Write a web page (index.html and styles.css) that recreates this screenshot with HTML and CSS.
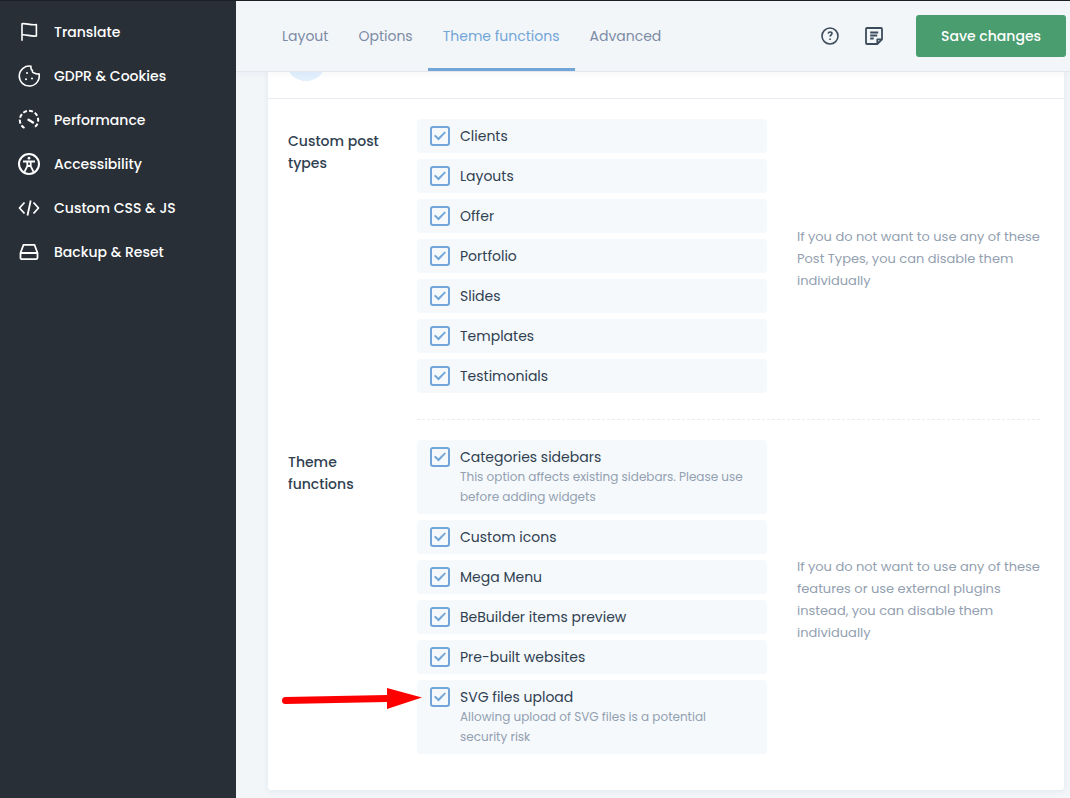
FILE: index.html
```html
<!DOCTYPE html>
<html lang="en">
<head>
<meta charset="utf-8">
<meta name="viewport" content="width=device-width, initial-scale=1">
<title>Theme functions</title>
<link rel="stylesheet" href="styles.css">
</head>
<body>
<div class="app">
  <nav class="sidebar" aria-label="Settings">
    <a class="side-link" href="#translate">
      <svg class="icon" viewBox="0 0 22 22"><path d="M4 19.700V2.800c4-.8 8 1.500 14.400.8v11.400c-5.600.8-10.400-1.900-14.400-1.200"/></svg>
      <span>Translate</span></a>
    <a class="side-link" href="#gdpr">
      <svg class="icon" viewBox="0 0 22 22"><path d="M13 1.200A10 10 0 1 0 21 8.800c-1.800.3-3.400.1-4.300-.7-1.900-.2-2.500-1.300-2.300-2.700-1.400-1-1.800-2.400-1.400-4.200z"/><path class="dots" d="M9 8h.01M8 14.200h.01M14 13.500h.01"/></svg>
      <span>GDPR &amp; Cookies</span></a>
    <a class="side-link" href="#performance">
      <svg class="icon" viewBox="0 0 22 22"><path class="dash" d="M6.500 19A9.200 9.200 0 1 1 15.500 19"/><path class="needle" d="M10.500 10.800l4.500 2.700"/></svg>
      <span>Performance</span></a>
    <a class="side-link" href="#accessibility">
      <svg class="icon" viewBox="0 0 22 22"><circle class="bold" cx="11" cy="11" r="10"/><circle class="fill" cx="11" cy="5.200" r="1.400"/><path class="code" d="M5 8.500h12M9.300 8.700v4.500L6.500 18.800M12.700 8.700v4.500l2.800 5.600M9.300 13h3.400"/></svg>
      <span>Accessibility</span></a>
    <a class="side-link" href="#custom">
      <svg class="icon" viewBox="0 0 22 22"><path class="code" d="M6.500 5.500L1.500 11l5 5.500M15.500 5.500l5 5.500-5 5.500M12.700 3.500L9.500 18.500"/></svg>
      <span>Custom CSS &amp; JS</span></a>
    <a class="side-link" href="#backup">
      <svg class="icon" viewBox="0 0 22 22"><path class="code" d="M5.500 3.800h11L19.500 12v4.700a1.500 1.500 0 0 1-1.500 1.500H4a1.500 1.500 0 0 1-1.500-1.500V12zM2.500 12h17"/></svg>
      <span>Backup &amp; Reset</span></a>
  </nav>

  <main class="main">
    <header class="topbar">
      <nav class="tabs" aria-label="Sections">
        <a class="tab" href="#layout">Layout</a>
        <a class="tab" href="#options">Options</a>
        <a class="tab active" href="#functions" aria-current="page">Theme functions</a>
        <a class="tab" href="#advanced">Advanced</a>
      </nav>
      <div class="actions">
        <button class="icon-button" type="button" aria-label="Help">
          <svg class="icon" viewBox="0 0 22 22"><circle cx="11" cy="11" r="8"/><path d="M9.200 8.600c.2-1.100.9-1.600 1.900-1.600 1.100 0 1.900.7 1.900 1.600 0 1.400-1.900 1.400-1.900 2.900M11.100 13.400v1.500"/></svg>
        </button>
        <button class="icon-button" type="button" aria-label="Notes">
          <svg class="icon" viewBox="0 0 22 22"><path class="code" d="M14.300 19H4a1 1 0 0 1-1-1V4a1 1 0 0 1 1-1h14a1 1 0 0 1 1 1v10.300zM14.300 19v-4.700H19M7.200 7.500h8M7.200 10.500h7M7.200 13.500h3.500"/></svg>
        </button>
        <button class="save" type="button">Save changes</button>
      </div>
    </header>

    <form class="card">
      <div class="card-head"><span class="badge"></span></div>
      <div class="card-body">
        <section class="row">
          <h2 class="label">Custom post types</h2>
          <div class="options">
            <label class="option"><input type="checkbox" checked><span>Clients</span></label>
            <label class="option"><input type="checkbox" checked><span>Layouts</span></label>
            <label class="option"><input type="checkbox" checked><span>Offer</span></label>
            <label class="option"><input type="checkbox" checked><span>Portfolio</span></label>
            <label class="option"><input type="checkbox" checked><span>Slides</span></label>
            <label class="option"><input type="checkbox" checked><span>Templates</span></label>
            <label class="option"><input type="checkbox" checked><span>Testimonials</span></label>
          </div>
          <p class="hint">If you do not want to use any of these Post Types, you can disable them individually</p>
          <hr class="divider">
        </section>
        <section class="row">
          <h2 class="label">Theme functions</h2>
          <div class="options">
            <label class="option"><input type="checkbox" checked><span>Categories sidebars<small class="note">This option affects existing sidebars. Please use before adding widgets</small></span></label>
            <label class="option"><input type="checkbox" checked><span>Custom icons</span></label>
            <label class="option"><input type="checkbox" checked><span>Mega Menu</span></label>
            <label class="option"><input type="checkbox" checked><span>BeBuilder items preview</span></label>
            <label class="option"><input type="checkbox" checked><span>Pre-built websites</span></label>
            <label class="option"><input type="checkbox" checked><span>SVG files upload<small class="note">Allowing upload of SVG files is a potential security risk</small></span>
              <svg class="arrow" viewBox="0 0 140 22" aria-hidden="true"><path d="M3.500 10L105 8V1l35 9.500L105 22v-7L3.500 17a3.500 3.500 0 0 1 0-7z"/></svg>
            </label>
          </div>
          <p class="hint">If you do not want to use any of these features or use external plugins instead, you can disable them individually</p>
        </section>
      </div>
    </form>
  </main>
</div>
</body>
</html>
```
FILE: styles.css
```css
* { box-sizing: border-box; }

body {
  margin: 0;
  background: #f2f6f9;
  color: #304050;
  font: 400 14px/20px Poppins, Inter, sans-serif;
}

.app {
  display: grid;
  grid-template-columns: 236px minmax(0, 1fr);
  min-height: 100vh;
  border-top: 1px solid #1d2127;
}

.sidebar {
  padding-top: 9px;
  background: #292f37;
}

.side-link {
  display: flex;
  align-items: center;
  gap: 14px;
  height: 44px;
  padding: 0 18px;
  color: #fff;
  font-weight: 500;
  text-decoration: none;
}

.icon {
  display: block;
  flex: none;
  width: 22px;
  height: 22px;
  fill: none;
  stroke: currentColor;
  stroke-width: 1.6;
  stroke-linejoin: round;
}
.icon .dots { stroke-width: 2; stroke-linecap: round; }
.icon .dash { stroke-width: 2; stroke-dasharray: 4 2; }
.icon .needle { stroke-width: 2.4; stroke-linecap: round; }
.icon .code { stroke-width: 1.8; }
.icon .bold { stroke-width: 2; }
.icon .fill { fill: currentColor; stroke: none; }

.main { padding-bottom: 8px; }

.topbar {
  position: relative;
  z-index: 1;
  display: flex;
  justify-content: space-between;
  height: 71px;
  padding: 0 4px 0 31px;
  background: #f2f6f9;
  border-bottom: 1px solid #e4e8ee;
  box-shadow: 0 2px 6px rgba(40, 60, 90, 0.04);
}

.tabs { display: flex; }

.tab {
  display: flex;
  align-items: center;
  padding: 3px 15px 0;
  border-bottom: 3px solid transparent;
  border-radius: 2px 2px 0 0;
  color: #7d8ba5;
  text-decoration: none;
}
.tab.active { color: #72a5d8; border-bottom-color: #72a5d8; }

.actions { display: flex; align-items: center; }

.icon-button {
  padding: 11px;
  border: 0;
  background: none;
  color: #3c4b5c;
}

.save {
  height: 42px;
  margin-left: 20px;
  padding: 0 25px;
  border: 0;
  border-radius: 3px;
  background: #4a9d6f;
  color: #fff;
  font: inherit;
  font-weight: 500;
}

.card {
  margin: 0 6px 0 32px;
  background: #fff;
  border-radius: 0 0 3px 3px;
  box-shadow: 0 1px 6px rgba(40, 60, 100, 0.08);
}

.card-head {
  display: flex;
  align-items: flex-end;
  height: 27px;
  padding: 0 18px 17px;
  border-bottom: 1px solid #e9ebf3;
}

.badge {
  flex: none;
  width: 40px;
  height: 40px;
  border-radius: 50%;
  background: #e2effd;
}

.card-body {
  display: grid;
  gap: 20px;
  padding: 20px 24px 36px 20px;
}

.row {
  display: grid;
  grid-template-columns: 109px minmax(0, 350px) minmax(0, 1fr);
  column-gap: 20px;
}

.label {
  margin: 0;
  padding-top: 11px;
  font-size: 14px;
  font-weight: 500;
  line-height: 22px;
}

.options { display: grid; gap: 6px; }

.option {
  position: relative;
  display: flex;
  gap: 10px;
  padding: 7px 13px;
  border-radius: 4px;
  background: #f5f9fc;
}

.option input {
  display: grid;
  flex: none;
  width: 20px;
  height: 20px;
  margin: 0;
  place-items: center;
  appearance: none;
  border: 2px solid #72a5d8;
  border-radius: 3px;
  background: transparent;
}
.option input:checked::before {
  content: "";
  width: 12px;
  height: 10px;
  background: #72a5d8;
  clip-path: polygon(0 50%, 12% 38%, 37% 66%, 88% 4%, 100% 16%, 38% 94%);
}

.note {
  display: block;
  color: #93a0b0;
  font-size: 12px;
  line-height: 20px;
}

.hint {
  align-self: center;
  margin: 0;
  padding: 6px 0 0 10px;
  color: #93a0b0;
  font-size: 13px;
  line-height: 22px;
}

.divider {
  grid-column: 2 / -1;
  width: 100%;
  margin: 26px 0 0;
  border: 0;
  border-top: 1px dashed #e9ebf0;
}

.arrow {
  position: absolute;
  top: 7px;
  right: calc(100% - 5px);
  width: 140px;
  height: 22px;
  fill: #f00;
}
```
